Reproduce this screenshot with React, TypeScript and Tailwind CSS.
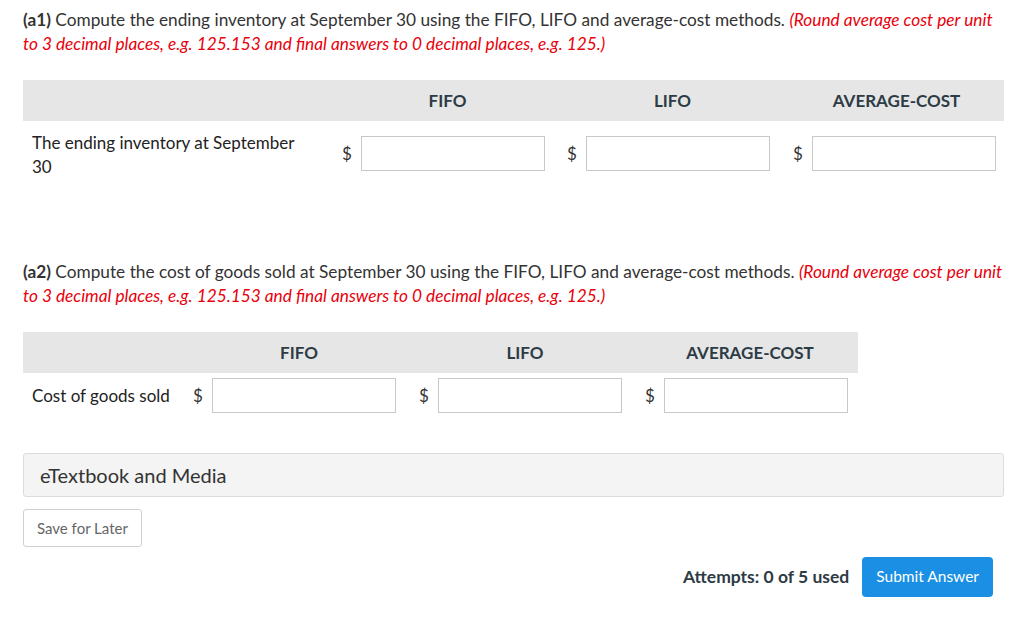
import React from 'react';

const font = { fontFamily: 'Lato, "Open Sans", sans-serif' };

function MoneyCell({ width }: { width: string }) {
  return (
    <div className={`${width} flex items-center pl-[9px]`}>
      <span className="w-[19px] text-[17px] text-[#333]">$</span>
      <input
        type="text"
        className="h-[35px] w-[184px] border border-[#c8c8c8] bg-white outline-none"
      />
    </div>
  );
}

function Instructions({ part, text }: { part: string; text: string }) {
  return (
    <p className="w-[983px] text-[17.25px] leading-[24px] text-[#333]">
      <span className="font-bold">({part})</span> {text}{' '}
      <span className="italic text-[#e8000b]">
        (Round average cost per unit to 3 decimal places, e.g. 125.153 and final answers to 0 decimal places, e.g. 125.)
      </span>
    </p>
  );
}

export default function App() {
  return (
    <div className="min-h-[623px] w-[1024px] bg-white pl-[23px] pt-2" style={font}>
      <div className="w-[981px]">
        <Instructions
          part="a1"
          text="Compute the ending inventory at September 30 using the FIFO, LIFO and average-cost methods."
        />

        {/* Table 1 */}
        <div className="mt-6 w-[981px]">
          <div className="flex h-[41px] items-center bg-[#e6e6e6] text-[17px] font-bold text-[#2d3b45]">
            <div className="w-[310px]" />
            <div className="w-[225px] pl-1 text-center">FIFO</div>
            <div className="w-[225px] pl-1 text-center">LIFO</div>
            <div className="w-[221px] pl-[6px] text-center">AVERAGE-COST</div>
          </div>
          <div className="flex items-start">
            <div className="w-[310px] pl-[9px] pr-6 pt-[10px] text-[17px] leading-[24px] text-[#222]">
              The ending inventory at September 30
            </div>
            <div className="flex pt-[15px]">
              <MoneyCell width="w-[225px]" />
              <MoneyCell width="w-[226px]" />
              <MoneyCell width="w-[220px]" />
            </div>
          </div>
        </div>

        <div className="mt-[81px]">
          <Instructions
            part="a2"
            text="Compute the cost of goods sold at September 30 using the FIFO, LIFO and average-cost methods."
          />
        </div>

        {/* Table 2 */}
        <div className="mt-6 w-[835px]">
          <div className="flex h-[41px] items-center bg-[#e6e6e6] text-[17px] font-bold text-[#2d3b45]">
            <div className="w-[161px]" />
            <div className="w-[226px] pl-1 text-center">FIFO</div>
            <div className="w-[226px] pl-1 text-center">LIFO</div>
            <div className="w-[222px] pl-[6px] text-center">AVERAGE-COST</div>
          </div>
          <div className="flex items-center pt-[5px]">
            <div className="w-[161px] pl-[9px] text-[17px] text-[#222]">Cost of goods sold</div>
            <MoneyCell width="w-[226px]" />
            <MoneyCell width="w-[226px]" />
            <MoneyCell width="w-[222px]" />
          </div>
        </div>

        <div className="mt-[40px] flex h-[44px] items-center rounded-[3px] border border-[#dcdcdc] bg-[#f4f4f4] pl-4 text-[20px] text-[#333]">
          eTextbook and Media
        </div>

        <button className="mt-3 h-[38px] rounded-[3px] border border-[#d0d0d0] bg-white px-[13px] text-[15px] text-[#666]">
          Save for Later
        </button>

        <div className="mt-[10px] flex items-center justify-end gap-[13px] pr-[11px]">
          <span className="text-[17.5px] font-bold text-[#2d3b45]">Attempts: 0 of 5 used</span>
          <button className="h-[40px] rounded-[4px] bg-[#1a8fe3] px-[14px] text-[15.5px] text-white">
            Submit Answer
          </button>
        </div>
      </div>
    </div>
  );
}
